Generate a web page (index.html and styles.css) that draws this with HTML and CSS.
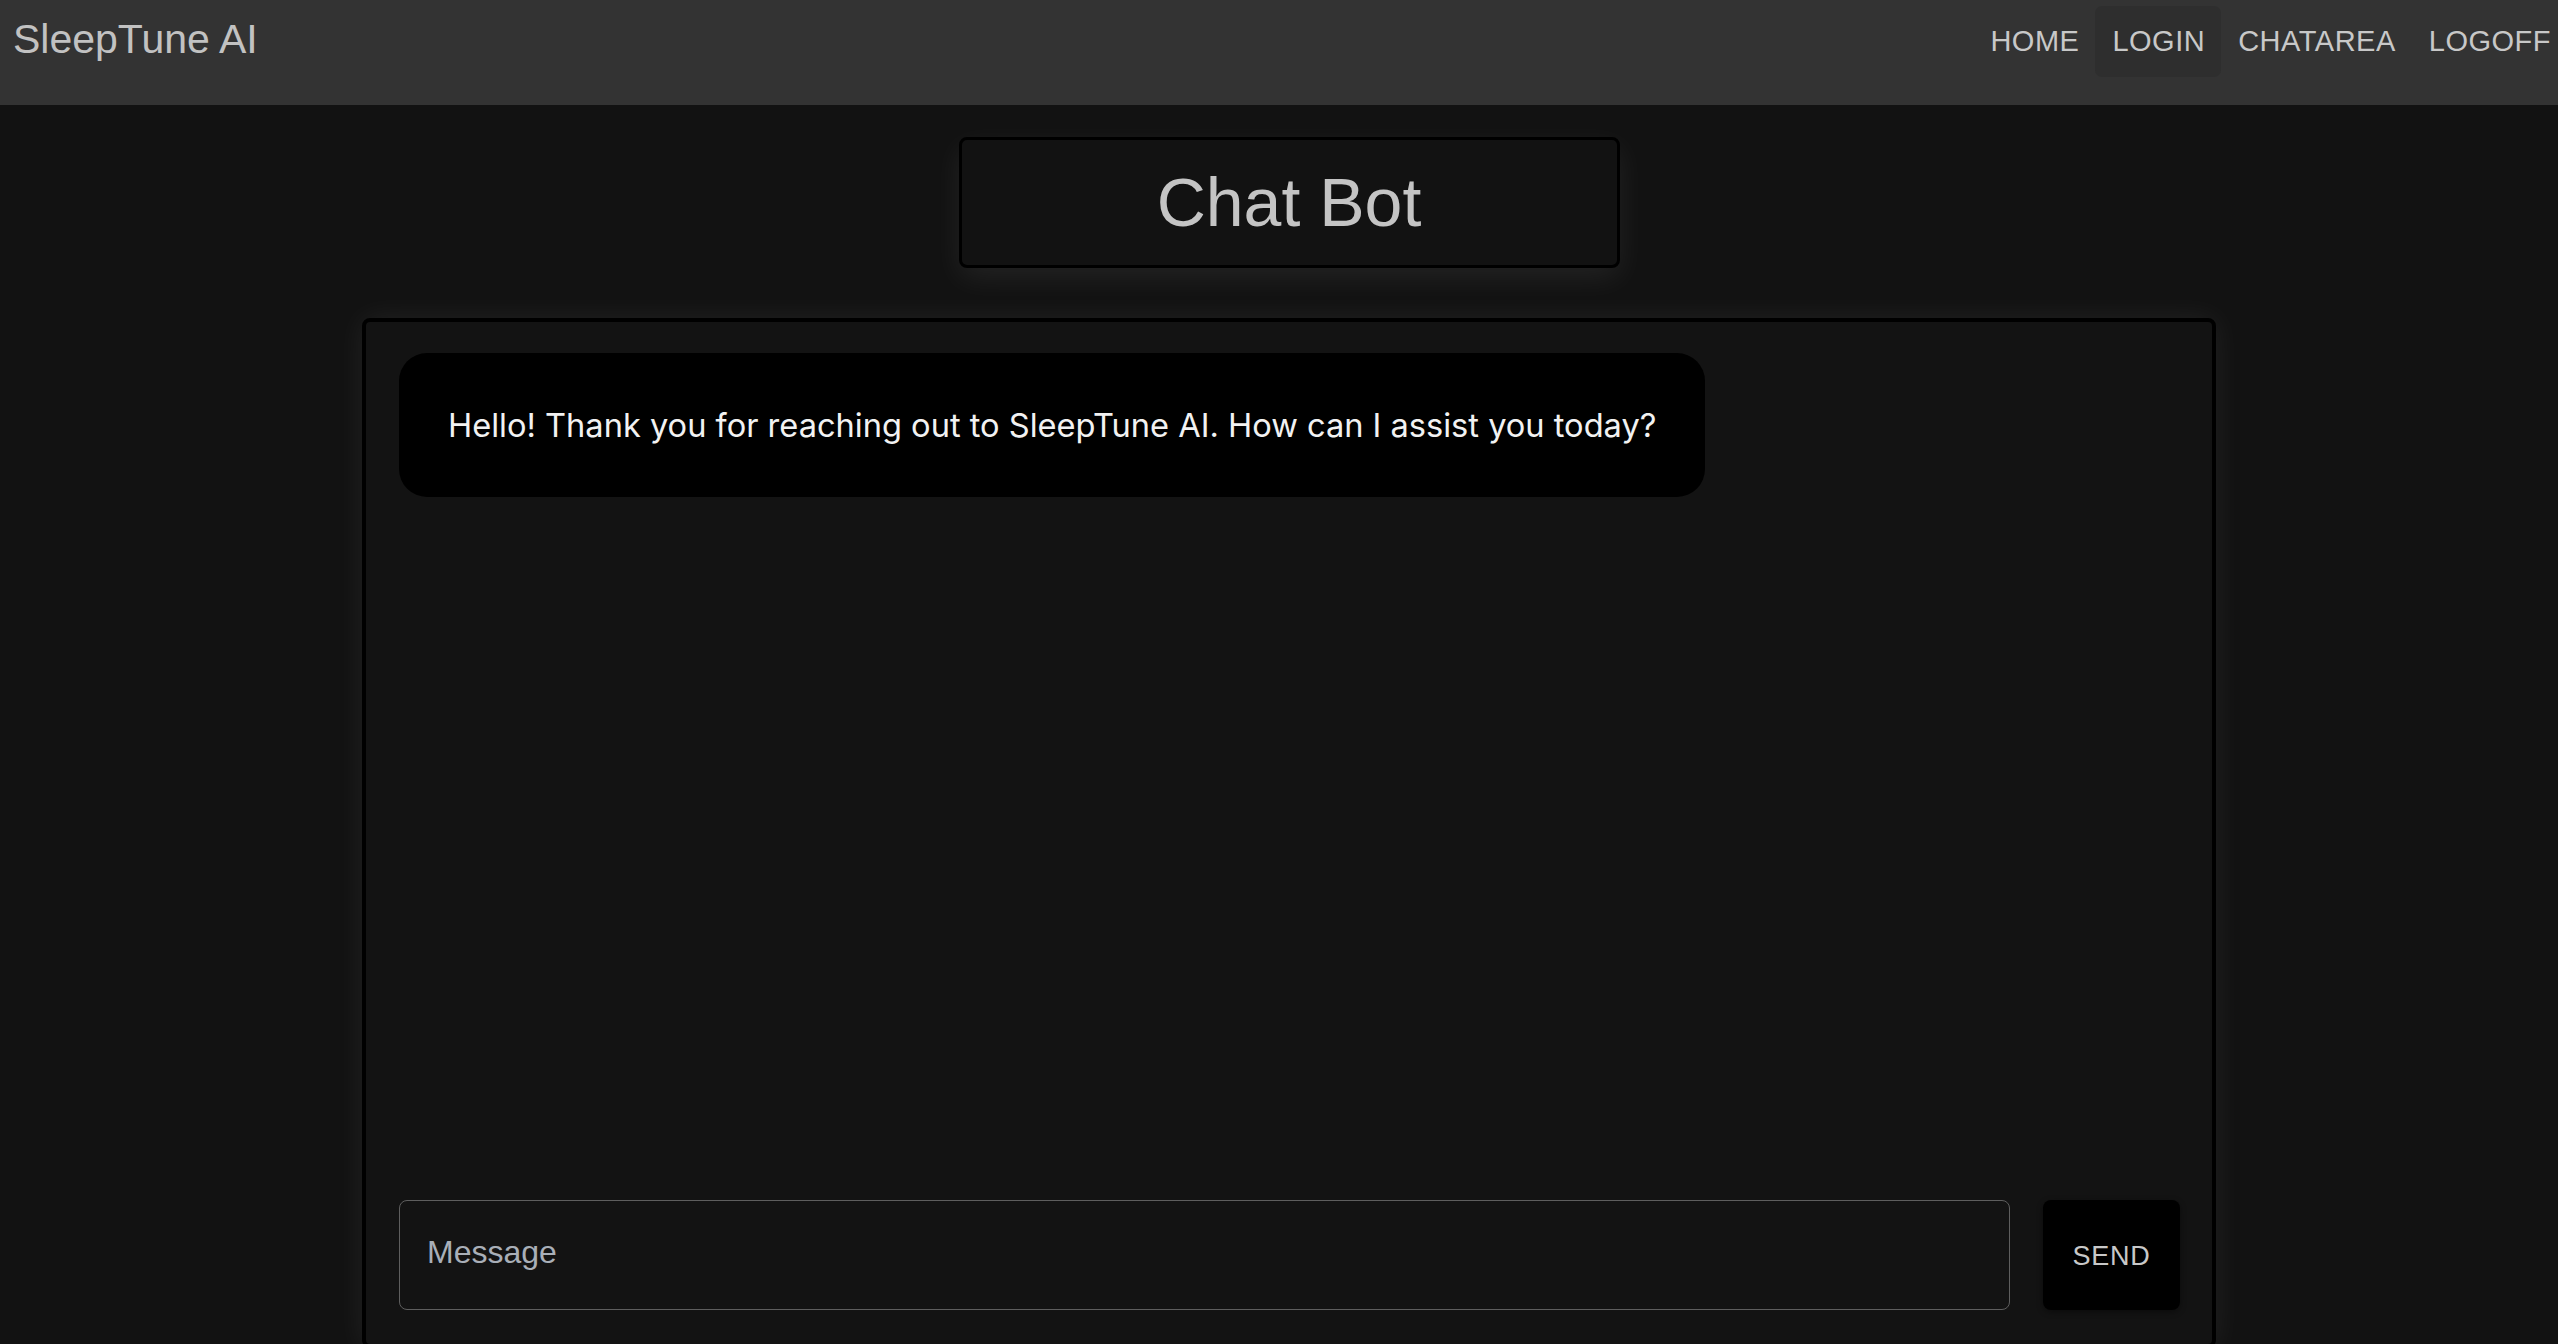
FILE: index.html
```html
<!DOCTYPE html>
<html lang="en">
<head>
<meta charset="utf-8">
<title>SleepTune AI</title>
<link rel="stylesheet" href="styles.css">
</head>
<body>
<header class="appbar">
  <div class="brand">SleepTune AI</div>
  <nav class="nav">
    <a class="nav-btn">HOME</a>
    <a class="nav-btn active">LOGIN</a>
    <a class="nav-btn">CHATAREA</a>
    <a class="nav-btn">LOGOFF</a>
  </nav>
</header>
<main class="main">
  <div class="title-box">Chat Bot</div>
  <section class="chat">
    <div class="messages">
      <div class="bubble">Hello! Thank you for reaching out to SleepTune AI. How can I assist you today?</div>
    </div>
    <div class="composer">
      <input class="input" type="text" placeholder="Message">
      <button class="send">SEND</button>
    </div>
  </section>
</main>
</body>
</html>
```
FILE: styles.css
```css
html, body {
  margin: 0;
  padding: 0;
}
body {
  background: #121212;
  height: 100vh;
  overflow: hidden;
  font-family: "Liberation Sans", Arial, sans-serif;
}
.appbar {
  height: 105px;
  box-sizing: border-box;
  background: #333333;
  display: flex;
  justify-content: space-between;
  align-items: flex-start;
  padding: 6px 0 0 13px;
  overflow: hidden;
}
.brand {
  font-size: 41px;
  line-height: 67px;
  color: #c2c2c2;
}
.nav {
  display: flex;
  margin-right: -9px;
}
.nav-btn {
  height: 71px;
  padding: 0 16px 0 17px;
  display: flex;
  align-items: center;
  font-size: 29px;
  letter-spacing: 0.5px;
  color: #c8c8c8;
  border-radius: 7px;
}
.nav-btn.active {
  background: #2e2e2e;
}
.main {
  padding-left: 20px;
  display: flex;
  flex-direction: column;
  align-items: center;
}
.title-box {
  margin-top: 32px;
  width: 661px;
  height: 131px;
  box-sizing: border-box;
  border: 3px solid #000;
  border-radius: 8px;
  background: #121212;
  box-shadow: 0 10px 30px rgba(255, 255, 255, 0.07);
  display: flex;
  align-items: center;
  justify-content: center;
  padding-bottom: 2px;
  font-size: 68px;
  color: #c4c4c4;
}
.chat {
  margin-top: 50px;
  width: 1854px;
  height: 1030px;
  box-sizing: border-box;
  border: 4px solid #000;
  border-radius: 8px;
  background: #131313;
  box-shadow: 0 0 30px rgba(255, 255, 255, 0.07);
  padding: 31px 32px 34px 33px;
  display: flex;
  flex-direction: column;
}
.messages {
  flex: 1;
  display: flex;
  flex-direction: column;
  align-items: flex-start;
}
.bubble {
  background: #000;
  color: #f2f2f2;
  border-radius: 28px;
  padding: 48px 49px;
  line-height: 48px;
  font-family: Inter, "Noto Sans", sans-serif;
  font-size: 32.6px;
}
.composer {
  display: flex;
  gap: 33px;
  height: 110px;
}
.input {
  flex: 1;
  box-sizing: border-box;
  height: 110px;
  background: transparent;
  border: 1.5px solid #5e5e5e;
  border-radius: 8px;
  padding: 0 0 6px 27px;
  font-family: "Liberation Sans", Arial, sans-serif;
  font-size: 32px;
  color: #e0e0e0;
  outline: none;
}
.input::placeholder {
  color: #a9afb8;
}
.send {
  width: 137px;
  height: 110px;
  background: #000;
  border: none;
  border-radius: 8px;
  padding-top: 3px;
  color: #c8c8c8;
  font-family: "Liberation Sans", Arial, sans-serif;
  font-size: 27px;
  letter-spacing: 0.8px;
  box-shadow: 0 2px 6px rgba(0, 0, 0, 0.4);
}
```
